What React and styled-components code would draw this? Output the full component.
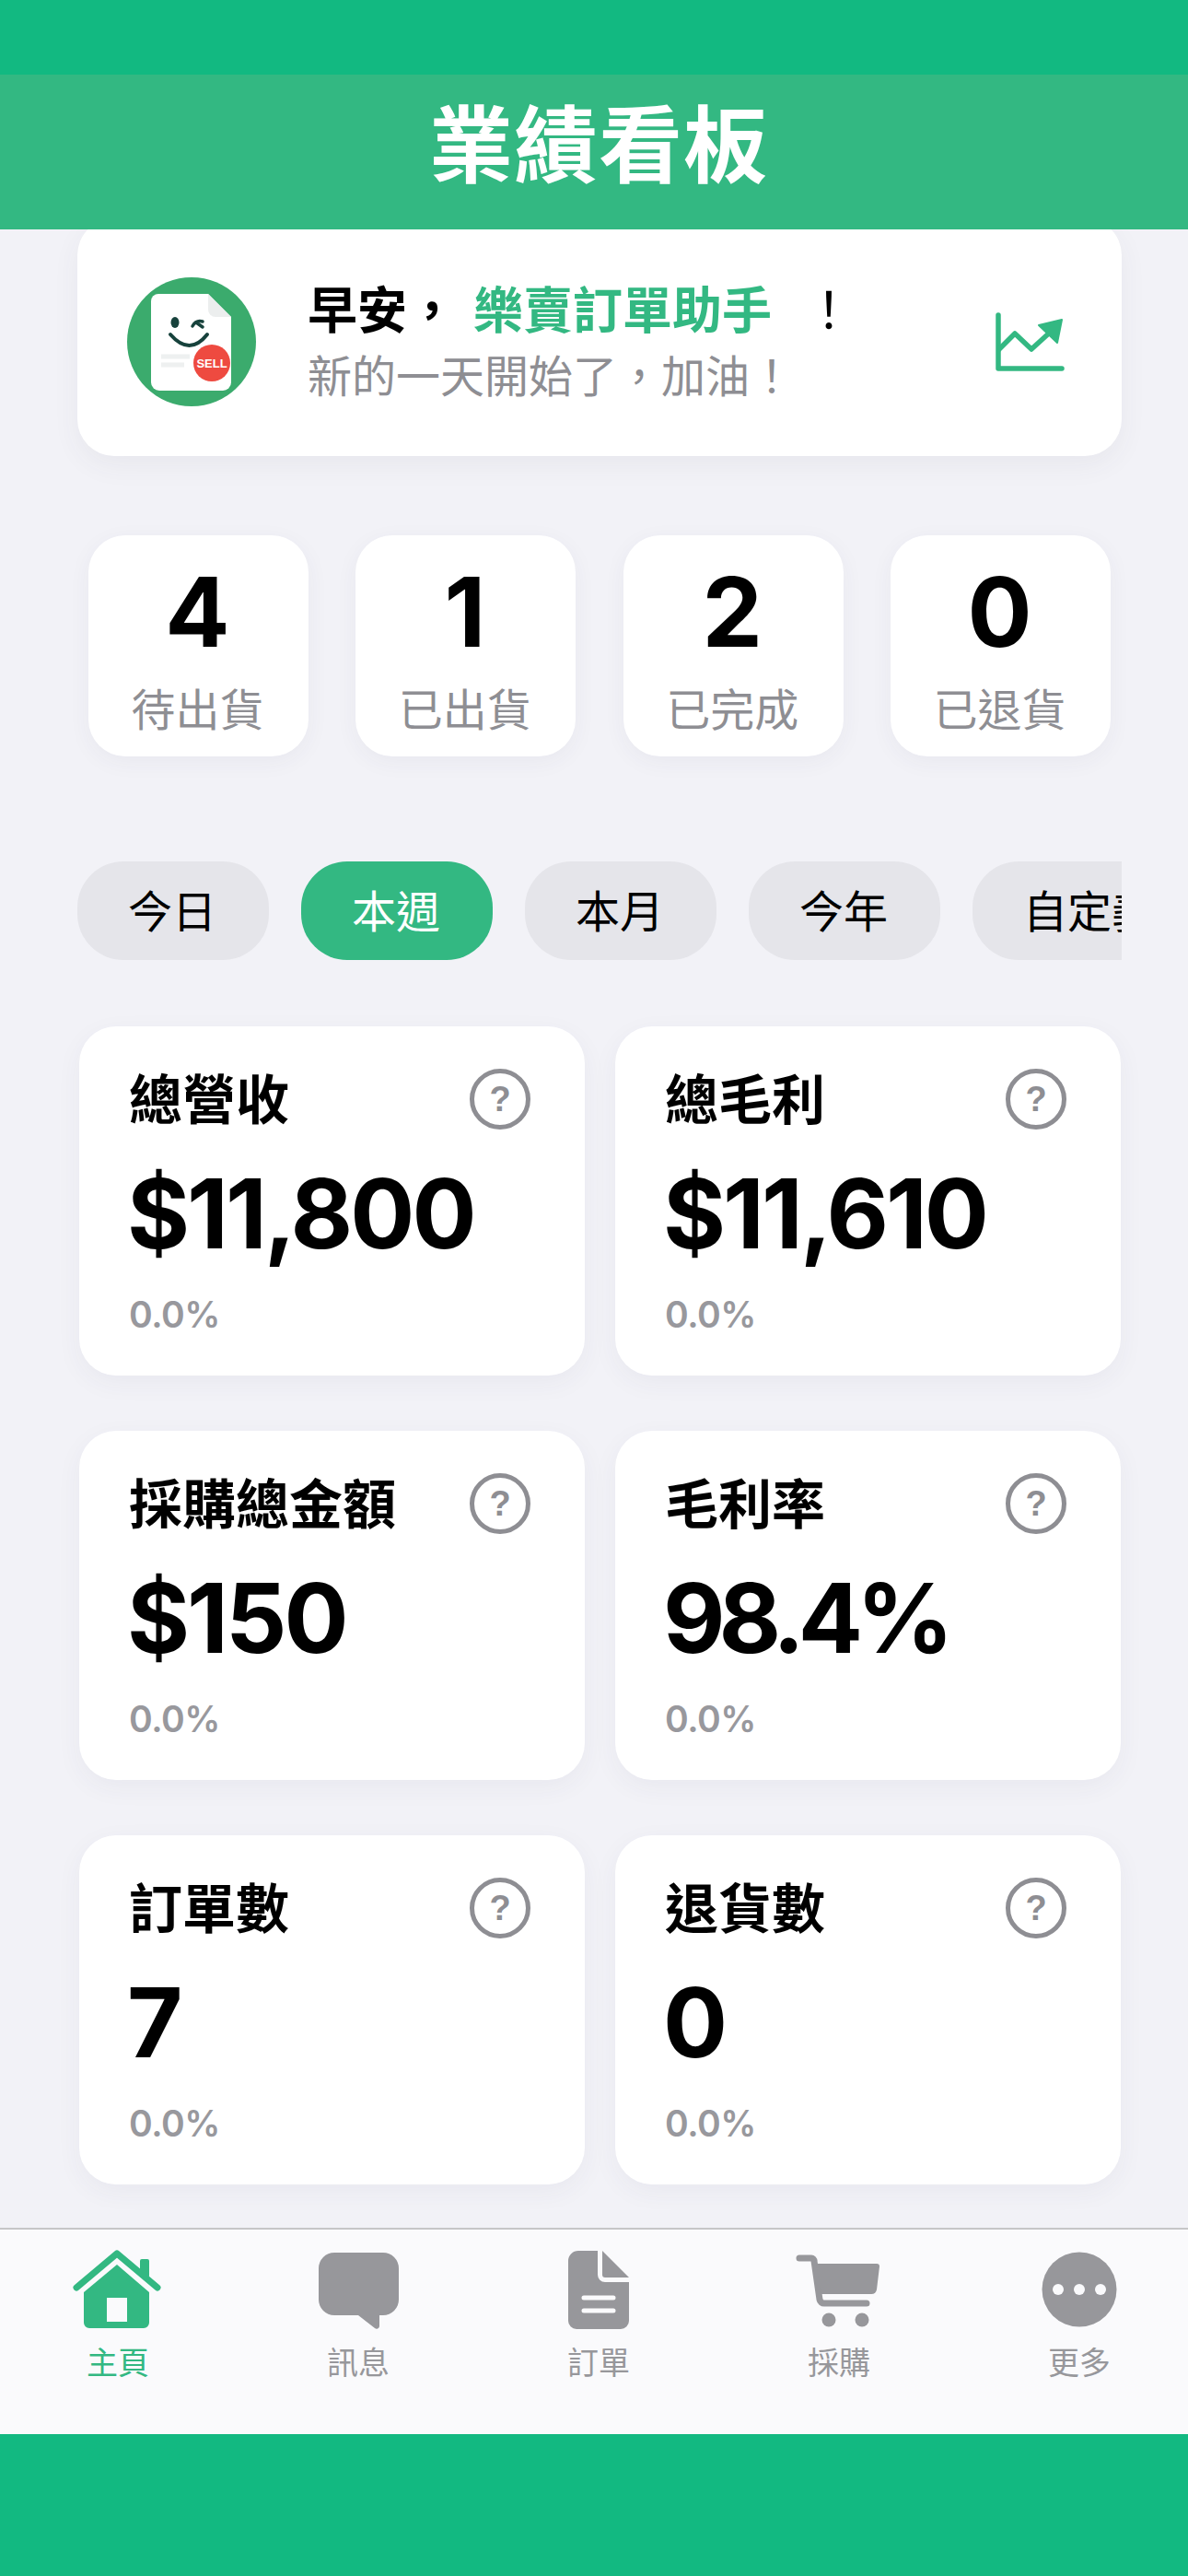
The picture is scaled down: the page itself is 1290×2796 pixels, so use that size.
import React from 'react';
import styled, { createGlobalStyle } from 'styled-components';

const GREEN = '#33b882';
const GREY = '#8e8e93';
const CJK = '"Liberation Sans", "Noto Sans CJK TC", sans-serif';
const NUM = 'Inter, "Liberation Sans", sans-serif';

const GlobalStyle = createGlobalStyle`
	html, body {
		margin: 0;
		padding: 0;
		background: #f2f2f7;
	}
	* {
		box-sizing: border-box;
	}
`;

const Page = styled.div`
	width: 1290px;
	height: 2796px;
	display: flex;
	flex-direction: column;
	overflow: hidden;
	background: #f2f2f7;
	font-family: ${CJK};
	color: #000;
`;

const StatusBar = styled.div`
	height: 81px;
	flex: none;
	background: #12b981;
`;

const Header = styled.header`
	position: relative;
	z-index: 1;
	height: 168px;
	flex: none;
	display: flex;
	align-items: center;
	justify-content: center;
	padding: 0 0 28px 10px;
	background: ${GREEN};
	color: #fff;
	font-size: 91px;
	font-weight: 700;
	letter-spacing: 1px;
`;

const GreetingCard = styled.section`
	flex: none;
	height: 258px;
	margin: -12px 72px 0 84px;
	padding: 0 62px 0 54px;
	display: flex;
	align-items: center;
	background: #fff;
	border-radius: 40px;
	box-shadow: 0 10px 30px rgba(60, 60, 90, 0.06);
`;

const Avatar = styled.svg`
	width: 140px;
	height: 140px;
	flex: none;
	margin-top: 10px;
`;

const GreetingText = styled.div`
	flex: 1;
	margin: 12px 0 0 56px;
`;

const Hello = styled.div`
	font-size: 54px;
	line-height: 66px;
	font-weight: 700;
	white-space: pre;
`;

const Brand = styled.span`
	margin-left: 18px;
	margin-right: 5px;
	color: ${GREEN};
`;

const Bang = styled.span`
	font-weight: 400;
`;

const Cheer = styled.div`
	margin-top: 9px;
	font-size: 48px;
	line-height: 60px;
	color: ${GREY};
`;

const ChartIcon = styled.svg`
	width: 76px;
	height: 66px;
	flex: none;
	margin-top: 10px;
`;

const StatsRow = styled.section`
	flex: none;
	margin: 86px 84px 0 96px;
	display: flex;
	justify-content: space-between;
`;

const StatCard = styled.div`
	width: 239px;
	height: 240px;
	padding: 25px 2px 0 0;
	display: flex;
	flex-direction: column;
	align-items: center;
	background: #fff;
	border-radius: 40px;
	box-shadow: 0 6px 24px rgba(60, 60, 90, 0.05);
`;

const StatNumber = styled.div`
	font-family: ${NUM};
	font-size: 104px;
	line-height: 116px;
	font-weight: 700;
`;

const StatLabel = styled.div`
	margin-top: 20px;
	font-size: 48px;
	line-height: 60px;
	color: ${GREY};
`;

const PillRow = styled.nav`
	flex: none;
	margin: 114px 72px 0 84px;
	display: flex;
	gap: 35px;
	overflow: hidden;
`;

const Pill = styled.div`
	flex: none;
	height: 107px;
	padding: 0 57px 6px 55px;
	display: flex;
	align-items: center;
	justify-content: center;
	border-radius: 50px;
	font-size: 48px;
	white-space: nowrap;
	background: ${(props) => (props.$active ? GREEN : '#e5e5ea')};
	color: ${(props) => (props.$active ? '#fff' : '#000')};
`;

const MetricGrid = styled.section`
	flex: none;
	margin: 72px 74px 0 86px;
	display: grid;
	grid-template-columns: 549px 549px;
	column-gap: 33px;
	row-gap: 60px;
`;

const MetricCard = styled.div`
	height: 379px;
	padding: 42px 56px 0 54px;
	background: #fff;
	border-radius: 40px;
	box-shadow: 0 8px 28px rgba(60, 60, 90, 0.05);
`;

const MetricHead = styled.div`
	display: flex;
	align-items: center;
	justify-content: space-between;
	height: 74px;
`;

const MetricTitle = styled.div`
	margin-bottom: 6px;
	font-size: 58px;
	font-weight: 700;
`;

const HelpIcon = styled.svg`
	width: 68px;
	height: 68px;
	flex: none;
	margin-right: 2px;
`;

const MetricValue = styled.div`
	margin-top: 29px;
	margin-left: -2px;
	font-family: ${NUM};
	font-size: 104px;
	line-height: 116px;
	font-weight: 700;
	letter-spacing: ${(props) => (props.$tight ? '-7px' : '-3px')};
`;

const MetricDelta = styled.div`
	margin-top: 27px;
	font-family: ${NUM};
	font-size: 39px;
	line-height: 50px;
	font-weight: 600;
	letter-spacing: -0.5px;
	color: #98989d;
`;

const TabBar = styled.nav`
	flex: none;
	height: 224px;
	margin-top: auto;
	padding-top: 21px;
	display: flex;
	gap: 5px;
	background: #fafafc;
	border-top: 2px solid #c6c6c8;
`;

const Tab = styled.div`
	flex: none;
	width: 256px;
	display: flex;
	flex-direction: column;
	align-items: center;
	color: ${(props) => (props.$active ? GREEN : '#97979b')};
`;

const TabIcon = styled.svg`
	width: 100px;
	height: 90px;
	flex: none;
`;

const TabLabel = styled.div`
	margin-top: 12px;
	font-size: 34px;
	line-height: 44px;
`;

const HomeIndicator = styled.div`
	height: 154px;
	flex: none;
	background: #12b981;
`;

const stats = [
	{ value: '4', label: '待出貨' },
	{ value: '1', label: '已出貨' },
	{ value: '2', label: '已完成' },
	{ value: '0', label: '已退貨' },
];

const ranges = ['今日', '本週', '本月', '今年', '自定義'];

const metrics = [
	{ title: '總營收', value: '$11,800' },
	{ title: '總毛利', value: '$11,610' },
	{ title: '採購總金額', value: '$150' },
	{ title: '毛利率', value: '98.4%', tight: true },
	{ title: '訂單數', value: '7' },
	{ title: '退貨數', value: '0' },
];

function HomeGlyph() {
	return (
		<TabIcon viewBox='-1 0 100 90'>
			<path d='M4 42 L48 5 L92 42' fill='none' stroke='currentColor' strokeWidth='7' strokeLinecap='round' strokeLinejoin='round' />
			<rect x='73' y='11' width='10' height='20' rx='2' fill='currentColor' />
			<path
				d='M48 17 L83 47 V80 a6 6 0 0 1 -6 6 H18 a6 6 0 0 1 -6 -6 V47 Z M37 53 V79 H59 V53 Z'
				fill='currentColor'
				fillRule='evenodd'
			/>
		</TabIcon>
	);
}

function ChatGlyph() {
	return (
		<TabIcon viewBox='0 0 100 90'>
			<path
				d='M24 4 H77 a17 17 0 0 1 17 17 V55 a17 17 0 0 1 -17 17 H73 V84 a3 3 0 0 1 -5 2 L50 72 H24 a17 17 0 0 1 -17 -17 V21 a17 17 0 0 1 17 -17 Z'
				fill='currentColor'
			/>
		</TabIcon>
	);
}

function DocGlyph() {
	return (
		<TabIcon viewBox='0 0 100 90'>
			<path d='M28 2 H49 V28 a8 8 0 0 0 8 8 H83 V78 a9 9 0 0 1 -9 9 H26 a9 9 0 0 1 -9 -9 V13 a11 11 0 0 1 11 -11 Z' fill='currentColor' />
			<path d='M54 2 L83 31 H57 a3 3 0 0 1 -3 -3 Z' fill='currentColor' />
			<path d='M34 53 H66 M34 67 H66' stroke='#fafafc' strokeWidth='5' strokeLinecap='round' />
		</TabIcon>
	);
}

function CartGlyph() {
	return (
		<TabIcon viewBox='0 0 100 90'>
			<path d='M7 10 H20 a3 3 0 0 1 3 3 L29 55 a5 5 0 0 0 5 4 H80' fill='none' stroke='currentColor' strokeWidth='7' strokeLinecap='round' />
			<path d='M25 16 H91 a3 3 0 0 1 3 3 L91 44 a6 6 0 0 1 -6 5 H31 Z' fill='currentColor' />
			<circle cx='39' cy='77' r='7.5' fill='currentColor' />
			<circle cx='75' cy='77' r='7.5' fill='currentColor' />
		</TabIcon>
	);
}

function MoreGlyph() {
	return (
		<TabIcon viewBox='0 0 100 90'>
			<circle cx='50' cy='44' r='40.5' fill='currentColor' />
			<circle cx='27' cy='44' r='6' fill='#fafafc' />
			<circle cx='50' cy='44' r='6' fill='#fafafc' />
			<circle cx='73' cy='44' r='6' fill='#fafafc' />
		</TabIcon>
	);
}

const tabs = [
	{ label: '主頁', Glyph: HomeGlyph, active: true },
	{ label: '訊息', Glyph: ChatGlyph },
	{ label: '訂單', Glyph: DocGlyph },
	{ label: '採購', Glyph: CartGlyph },
	{ label: '更多', Glyph: MoreGlyph },
];

function App() {
	return (
		<Page>
			<GlobalStyle />
			<StatusBar />
			<Header>業績看板</Header>

			<GreetingCard>
				<Avatar viewBox='0 0 140 140'>
					<circle cx='70' cy='70' r='70' fill='#3bab6d' />
					<path d='M34 18 H88 L113 43 V114 a9 9 0 0 1 -9 9 H35 a9 9 0 0 1 -9 -9 V26 a8 8 0 0 1 8 -8 Z' fill='#fff' />
					<path d='M88 18 L113 43 H96 a8 8 0 0 1 -8 -8 Z' fill='#eceeee' />
					<ellipse cx='52' cy='49' rx='4.5' ry='6' fill='#17423c' />
					<path d='M71 53 q4 -7 11 -5 M75 49 l7 5' fill='none' stroke='#17423c' strokeWidth='3.5' strokeLinecap='round' />
					<path d='M47 62 q21 24 40 0' fill='none' stroke='#17423c' strokeWidth='4' strokeLinecap='round' />
					<path d='M37 86 H68 M37 95 H62' stroke='#eef0f0' strokeWidth='5' />
					<circle cx='92' cy='93' r='20' fill='#ee4a40' />
					<text x='92' y='98' textAnchor='middle' fill='#fff' fontSize='13' fontWeight='700' fontFamily='"Liberation Sans", sans-serif'>
						SELL
					</text>
				</Avatar>
				<GreetingText>
					<Hello>
						早安，<Brand>樂賣訂單助手</Brand>
						<Bang>{'  '}！</Bang>
					</Hello>
					<Cheer>新的一天開始了，加油！</Cheer>
				</GreetingText>
				<ChartIcon viewBox='0 0 76 66'>
					<path d='M4 4 V62 H73' fill='none' stroke={GREEN} strokeWidth='5.5' strokeLinecap='round' strokeLinejoin='round' />
					<path d='M4 42 L22 24 L40 41 L62 21' fill='none' stroke={GREEN} strokeWidth='5.5' strokeLinejoin='round' />
					<path d='M48 15 L73 9 L68 34 Z' fill={GREEN} stroke={GREEN} strokeWidth='2' strokeLinejoin='round' />
				</ChartIcon>
			</GreetingCard>

			<StatsRow>
				{stats.map((stat) => (
					<StatCard key={stat.label}>
						<StatNumber>{stat.value}</StatNumber>
						<StatLabel>{stat.label}</StatLabel>
					</StatCard>
				))}
			</StatsRow>

			<PillRow>
				{ranges.map((range) => (
					<Pill key={range} $active={range === '本週'}>
						{range}
					</Pill>
				))}
			</PillRow>

			<MetricGrid>
				{metrics.map((metric) => (
					<MetricCard key={metric.title}>
						<MetricHead>
							<MetricTitle>{metric.title}</MetricTitle>
							<HelpIcon viewBox='0 0 68 68'>
								<circle cx='34' cy='34' r='30.5' fill='none' stroke={GREY} strokeWidth='5' />
								<text x='34' y='47' textAnchor='middle' fill={GREY} fontSize='38' fontWeight='700' fontFamily='"Liberation Sans", sans-serif'>
									?
								</text>
							</HelpIcon>
						</MetricHead>
						<MetricValue $tight={metric.tight}>{metric.value}</MetricValue>
						<MetricDelta>0.0%</MetricDelta>
					</MetricCard>
				))}
			</MetricGrid>

			<TabBar>
				{tabs.map(({ label, Glyph, active }) => (
					<Tab key={label} $active={active}>
						<Glyph />
						<TabLabel>{label}</TabLabel>
					</Tab>
				))}
			</TabBar>
			<HomeIndicator />
		</Page>
	);
}

export default App;
